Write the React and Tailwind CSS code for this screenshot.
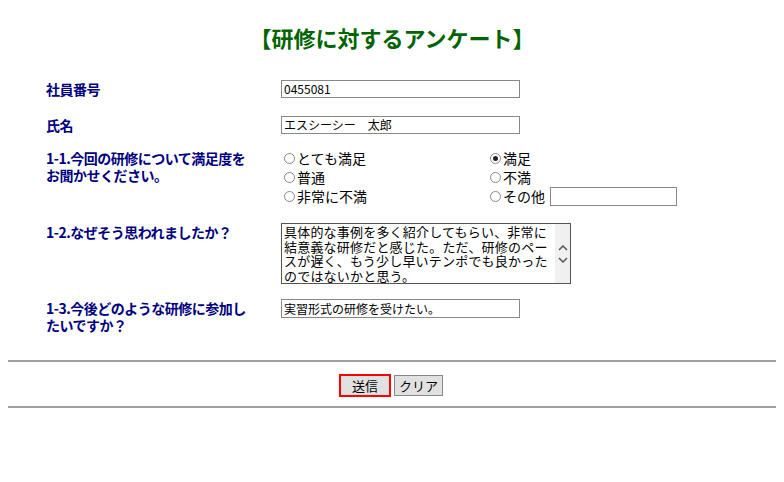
const jp = { fontFamily: '"Noto Sans CJK JP", "Liberation Sans", sans-serif' };

function Label({ children }) {
  return <div className="w-[235px] shrink-0 text-[14px] leading-[17px] font-bold text-[#000080] tracking-[-0.5px]">{children}</div>;
}

function Radio({ checked, label }) {
  return (
    <label className="flex items-center h-[19px] text-[14px] text-black">
      <span className="w-[11px] h-[11px] rounded-full border border-[#888] bg-white flex items-center justify-center mr-[2px] ml-[3px]">
        {checked && <span className="w-[5px] h-[5px] rounded-full bg-[#222]" />}
      </span>
      {label}
    </label>
  );
}

export default function App() {
  return (
    <div className="w-[784px] h-[482px] bg-white" style={jp}>
      <h1 className="pt-[22px] text-center text-[22px] leading-[30px] font-bold text-[#006400]">【研修に対するアンケート】</h1>
      <div className="pl-[46px] pt-[27px]">
        <div className="flex items-center h-[20px]">
          <Label>社員番号</Label>
          <div className="w-[239px] h-[18px] border border-[#888] text-[12px] leading-[16px] px-[2px]">0455081</div>
        </div>
        <div className="flex items-center h-[20px] mt-[16px]">
          <Label>氏名</Label>
          <div className="w-[239px] h-[18px] border border-[#888] text-[12px] leading-[16px] px-[2px]">エスシーシー　太郎</div>
        </div>
        <div className="flex mt-[14px]">
          <Label><div className="mt-[1px]">1-1.今回の研修について満足度を<br />お聞かせください。</div></Label>
          <div className="grid grid-cols-[206px_200px]">
            <Radio label="とても満足" />
            <Radio checked label="満足" />
            <Radio label="普通" />
            <Radio label="不満" />
            <Radio label="非常に不満" />
            <div className="flex items-center">
              <Radio label="その他" />
              <div className="ml-[5px] w-[127px] h-[19px] border border-[#888]" />
            </div>
          </div>
        </div>
        <div className="flex mt-[17px]">
          <Label><div className="mt-[1px]">1-2.なぜそう思われましたか？</div></Label>
          <div className="w-[290px] h-[61px] border border-[#555] flex">
            <div className="w-[273px] text-[13px] leading-[14.5px] pl-[2px] pr-[3px] pt-[1px] tracking-[0.2px] overflow-hidden">具体的な事例を多く紹介してもらい、非常に結意義な研修だと感じた。ただ、研修のペースが遅く、もう少し早いテンポでも良かったのではないかと思う。</div>
            <div className="flex-1 bg-[#f0f0f0] flex flex-col items-center justify-center gap-[6px]">
              <svg width="10" height="6" viewBox="0 0 10 6"><path d="M1 5 L5 1 L9 5" fill="none" stroke="#555" strokeWidth="1.5" /></svg>
              <svg width="10" height="6" viewBox="0 0 10 6"><path d="M1 1 L5 5 L9 1" fill="none" stroke="#555" strokeWidth="1.5" /></svg>
            </div>
          </div>
        </div>
        <div className="flex mt-[15px]">
          <Label><div className="mt-[1px]">1-3.今後どのような研修に参加し<br />たいですか？</div></Label>
          <div className="w-[239px] h-[19px] border border-[#888] text-[12px] leading-[17px] px-[2px]">実習形式の研修を受けたい。</div>
        </div>
      </div>
      <div className="mx-[8px] mt-[26px] border-t-2 border-[#a0a0a0]" />
      <div className="flex justify-center gap-[3px] mt-[12px] ml-[-2px]">
        <button className="w-[52px] h-[23px] border-2 border-[#ff0000] bg-[#e1e1e1] text-[13px] leading-[18px]">送信</button>
        <button className="w-[49px] h-[21px] mt-[1px] border border-[#888] bg-[#e1e1e1] text-[13px] leading-[18px]">クリア</button>
      </div>
      <div className="mx-[8px] mt-[9px] border-t-2 border-[#a0a0a0]" />
    </div>
  );
}
